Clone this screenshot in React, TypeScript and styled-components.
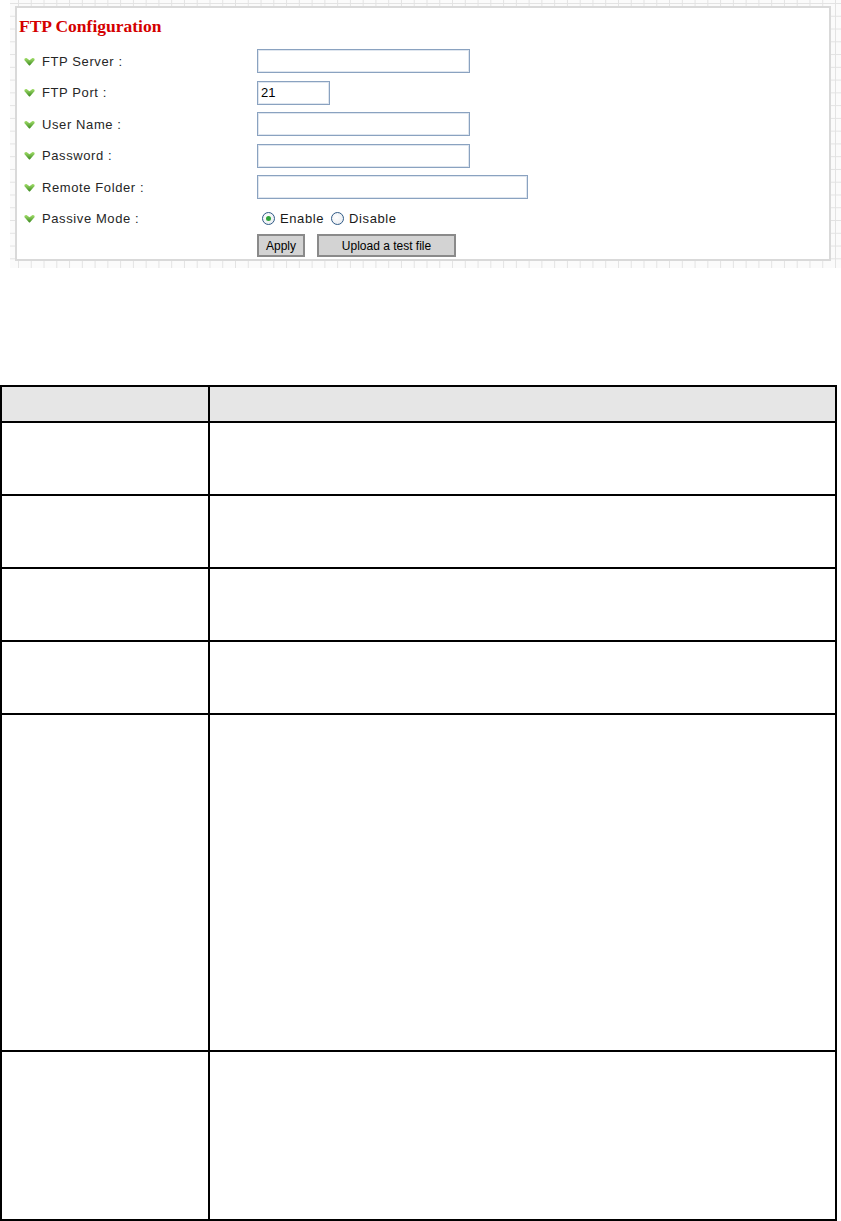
import React from "react";
import styled, { createGlobalStyle } from "styled-components";

const Global = createGlobalStyle`
  html, body { margin: 0; padding: 0; background: #ffffff; }
  body { font-family: "Liberation Sans", Arial, sans-serif; }
`;

const Page = styled.div`
  width: 841px;
  display: flex;
  flex-direction: column;
`;

const GridArea = styled.div`
  margin-left: 10px;
  height: 268px;
  padding: 6px 10px 0 5px;
  box-sizing: border-box;
  background-color: #fbfbfb;
  background-image:
    linear-gradient(#e3e3e3 1px, transparent 1px),
    linear-gradient(90deg, #e3e3e3 1px, transparent 1px);
  background-size: 12.77px 12.77px;
  background-position: 8px 3px;
`;

const Panel = styled.div`
  height: 255px;
  box-sizing: border-box;
  background: #ffffff;
  border: 2px solid #d9d9d9;
  padding: 8px 0 0 0;
  display: flex;
  flex-direction: column;
`;

const Title = styled.div`
  font-family: "Liberation Serif", "Times New Roman", serif;
  font-weight: bold;
  font-size: 17.5px;
  line-height: 21px;
  height: 21px;
  color: #d40000;
  margin: 0 0 8.5px 2px;
`;

const Form = styled.div`
  display: grid;
  grid-template-columns: 240px 1fr;
  grid-auto-rows: 31.5px;
`;

const Label = styled.div`
  display: flex;
  align-items: center;
  gap: 7px;
  padding-left: 7px;
  font-size: 13px;
  letter-spacing: 0.6px;
  color: #262626;
`;

const Field = styled.div`
  display: flex;
  align-items: center;
  gap: 12px;
`;

const TextInput = styled.input<{ $w: number }>`
  width: ${(p) => p.$w}px;
  height: 24px;
  box-sizing: border-box;
  border: 1px solid #8aa2c0;
  box-shadow: inset 0 0 0 1px #dfe6ef;
  padding: 0 3px;
  font-family: "Liberation Sans", Arial, sans-serif;
  font-size: 13px;
  color: #000;
  background: #fff;
  outline: none;
`;

const RadioGroup = styled.div`
  display: flex;
  align-items: center;
  padding-left: 5px;
  font-size: 13px;
  letter-spacing: 0.6px;
  color: #1a1a1a;
`;

const RadioItem = styled.label`
  display: flex;
  align-items: center;
  gap: 5px;
  margin-right: 7px;
`;

const RadioDot = styled.span<{ $on?: boolean }>`
  width: 13px;
  height: 13px;
  box-sizing: border-box;
  border-radius: 50%;
  border: 1px solid #2f5a86;
  background: radial-gradient(circle at 40% 40%, #ffffff 0%, #e4e8ee 100%);
  display: flex;
  align-items: center;
  justify-content: center;
  &::after {
    content: "";
    width: 5px;
    height: 5px;
    border-radius: 50%;
    background: ${(p) => (p.$on ? "#2ea33a" : "transparent")};
  }
`;

const ButtonRow = styled.div`
  display: flex;
  align-items: flex-start;
  gap: 12px;
`;

const Button = styled.button<{ $w: number }>`
  width: ${(p) => p.$w}px;
  height: 23px;
  box-sizing: border-box;
  border: 2px solid #8a8a8a;
  background: #d3d3d3;
  font-family: "Liberation Sans", Arial, sans-serif;
  font-size: 12px;
  color: #000;
  padding: 0;
  margin-top: -0.5px;
`;

const Table = styled.table`
  margin-top: 117px;
  width: 837px;
  border-collapse: separate;
  border-spacing: 0;
  border-top: 2px solid #000;
  border-left: 2px solid #000;
`;

const Cell = styled.td<{ $head?: boolean; $h: number }>`
  height: ${(p) => p.$h}px;
  padding: 0;
  box-sizing: content-box;
  border-right: 2px solid #000;
  border-bottom: 2px solid #000;
  background: ${(p) => (p.$head ? "#e6e6e6" : "#ffffff")};
`;

const Check = () => (
  <svg width="11" height="9" viewBox="0 0 11 9">
    <defs>
      <linearGradient id="gchk" x1="0" y1="0" x2="0" y2="1">
        <stop offset="0" stopColor="#a4e06c" />
        <stop offset="1" stopColor="#3c8a20" />
      </linearGradient>
    </defs>
    <path
      d="M0.3 3 Q0.3 0.6 2.6 1.1 L5.5 3.3 L8.4 1.1 Q10.7 0.6 10.7 3 L6.1 8.2 Q5.5 8.8 4.9 8.2 Z"
      fill="url(#gchk)"
    />
  </svg>
);

const rows: { label: string; w: number; value?: string }[] = [
  { label: "FTP Server :", w: 213 },
  { label: "FTP Port :", w: 73, value: "21" },
  { label: "User Name :", w: 213 },
  { label: "Password :", w: 213 },
  { label: "Remote Folder :", w: 271 },
];

const tableRows = [34, 71, 71, 71, 71, 335, 167];

export default function App() {
  return (
    <Page>
      <Global />
      <GridArea>
        <Panel>
          <Title>FTP Configuration</Title>
          <Form>
            {rows.map((r) => (
              <React.Fragment key={r.label}>
                <Label>
                  <Check />
                  {r.label}
                </Label>
                <Field>
                  <TextInput $w={r.w} defaultValue={r.value ?? ""} />
                </Field>
              </React.Fragment>
            ))}
            <Label>
              <Check />
              Passive Mode :
            </Label>
            <RadioGroup>
              <RadioItem>
                <RadioDot $on />
                Enable
              </RadioItem>
              <RadioItem>
                <RadioDot />
                Disable
              </RadioItem>
            </RadioGroup>
            <div />
            <ButtonRow>
              <Button $w={48}>Apply</Button>
              <Button $w={139}>Upload a test file</Button>
            </ButtonRow>
          </Form>
        </Panel>
      </GridArea>
      <Table>
        <tbody>
          {tableRows.map((h, i) => (
            <tr key={i}>
              <Cell $head={i === 0} $h={h} style={{ width: 206 }} />
              <Cell $head={i === 0} $h={h} />
            </tr>
          ))}
        </tbody>
      </Table>
    </Page>
  );
}
